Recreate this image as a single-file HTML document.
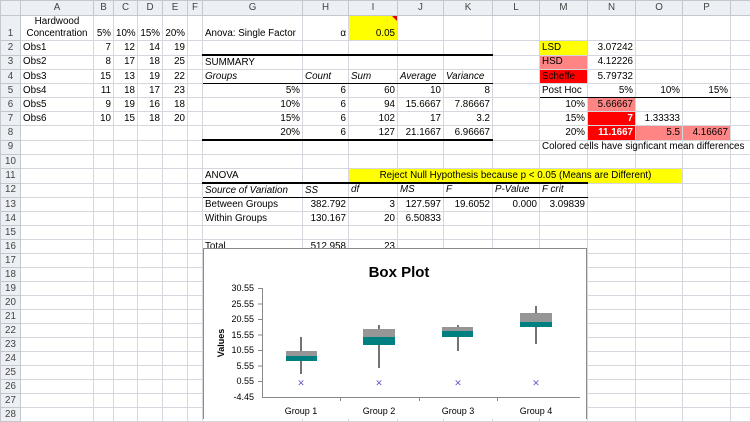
<!DOCTYPE html>
<html><head><meta charset="utf-8"><style>
body{margin:0;width:750px;height:419px;overflow:hidden;background:#fff;font-family:"Liberation Sans",Arial,sans-serif;font-size:9.8px;color:#000}
table{border-collapse:collapse;table-layout:fixed;position:absolute;left:0;top:0;width:750px}
td{border:1px solid #d4d8de;padding:0 2px;height:13px;white-space:nowrap;overflow:visible;line-height:12px;vertical-align:middle}
tr.h td{background:#eceff3;color:#444;text-align:center;height:14px;border-color:#c4c8ce}
td.rn{background:#eceff3;color:#444;text-align:center;border-color:#c4c8ce;padding:0}
.r{text-align:right}.c{text-align:center}.i{font-style:italic}
.y{background:#ffff00}.p{background:#ff8585}.red{background:#ff0000}.bw{font-weight:bold;color:#fff}
.tb{border-bottom:2px solid #000}.bb{border-bottom:1px solid #000}
tr.r1 td{vertical-align:bottom}
</style></head><body>
<table>
<colgroup><col style="width:20px"><col style="width:73px"><col style="width:20px"><col style="width:24px"><col style="width:25px"><col style="width:25px"><col style="width:15px"><col style="width:100px"><col style="width:46px"><col style="width:49px"><col style="width:46px"><col style="width:49px"><col style="width:47px"><col style="width:48px"><col style="width:48px"><col style="width:47px"><col style="width:48px"><col style="width:20px"></colgroup>
<tr class="h"><td></td><td>A</td><td>B</td><td>C</td><td>D</td><td>E</td><td>F</td><td>G</td><td>H</td><td>I</td><td>J</td><td>K</td><td>L</td><td>M</td><td>N</td><td>O</td><td>P</td><td></td></tr>
<tr class="r1" style="height:25px"><td class="rn">1</td><td class="c" style="line-height:12px">Hardwood<br>Concentration</td><td class="r">5%</td><td class="r">10%</td><td class="r">15%</td><td class="r">20%</td><td></td><td>Anova: Single Factor</td><td class="r">α</td><td class="r y" style="position:relative">0.05<span style="position:absolute;right:0;top:0;border-top:5px solid #d00;border-left:5px solid transparent"></span></td><td></td><td></td><td></td><td></td><td></td><td></td><td></td><td></td></tr>
<tr><td class="rn">2</td><td>Obs1</td><td class="r">7</td><td class="r">12</td><td class="r">14</td><td class="r">19</td><td></td><td class="tb"></td><td class="tb"></td><td class="tb"></td><td class="tb"></td><td class="tb"></td><td></td><td class="y">LSD</td><td class="r">3.07242</td><td></td><td></td><td></td></tr>
<tr><td class="rn">3</td><td>Obs2</td><td class="r">8</td><td class="r">17</td><td class="r">18</td><td class="r">25</td><td></td><td>SUMMARY</td><td></td><td></td><td></td><td></td><td></td><td class="p">HSD</td><td class="r">4.12226</td><td></td><td></td><td></td></tr>
<tr><td class="rn">4</td><td>Obs3</td><td class="r">15</td><td class="r">13</td><td class="r">19</td><td class="r">22</td><td></td><td class="i bb">Groups</td><td class="i bb">Count</td><td class="i bb">Sum</td><td class="i bb">Average</td><td class="i bb">Variance</td><td></td><td class="red">Scheffe</td><td class="r">5.79732</td><td></td><td></td><td></td></tr>
<tr><td class="rn">5</td><td>Obs4</td><td class="r">11</td><td class="r">18</td><td class="r">17</td><td class="r">23</td><td></td><td class="r">5%</td><td class="r">6</td><td class="r">60</td><td class="r">10</td><td class="r">8</td><td></td><td class="bb">Post Hoc</td><td class="r bb">5%</td><td class="r bb">10%</td><td class="r bb">15%</td><td></td></tr>
<tr><td class="rn">6</td><td>Obs5</td><td class="r">9</td><td class="r">19</td><td class="r">16</td><td class="r">18</td><td></td><td class="r">10%</td><td class="r">6</td><td class="r">94</td><td class="r">15.6667</td><td class="r">7.86667</td><td></td><td class="r">10%</td><td class="r p">5.66667</td><td></td><td></td><td></td></tr>
<tr><td class="rn">7</td><td>Obs6</td><td class="r">10</td><td class="r">15</td><td class="r">18</td><td class="r">20</td><td></td><td class="r">15%</td><td class="r">6</td><td class="r">102</td><td class="r">17</td><td class="r">3.2</td><td></td><td class="r">15%</td><td class="r red bw">7</td><td class="r">1.33333</td><td></td><td></td></tr>
<tr><td class="rn">8</td><td></td><td></td><td></td><td></td><td></td><td></td><td class="r tb">20%</td><td class="r tb">6</td><td class="r tb">127</td><td class="r tb">21.1667</td><td class="r tb">6.96667</td><td></td><td class="r">20%</td><td class="r red bw">11.1667</td><td class="r p">5.5</td><td class="r p">4.16667</td><td></td></tr>
<tr><td class="rn">9</td><td></td><td></td><td></td><td></td><td></td><td></td><td></td><td></td><td></td><td></td><td></td><td></td><td>Colored cells have signficant mean differences</td><td></td><td></td><td></td><td></td></tr>
<tr><td class="rn">10</td><td></td><td></td><td></td><td></td><td></td><td></td><td></td><td></td><td></td><td></td><td></td><td></td><td></td><td></td><td></td><td></td><td></td></tr>
<tr><td class="rn">11</td><td></td><td></td><td></td><td></td><td></td><td></td><td class="tb">ANOVA</td><td class="tb"></td><td colspan="7" class="y c" style="position:relative">Reject Null Hypothesis because p &lt; 0.05 (Means are Different)<span style="position:absolute;left:0;width:239px;bottom:-1px;border-bottom:2px solid #000"></span></td><td></td><td></td></tr>
<tr><td class="rn">12</td><td></td><td></td><td></td><td></td><td></td><td></td><td class="i bb">Source of Variation</td><td class="i bb">SS</td><td class="i bb">df</td><td class="i bb">MS</td><td class="i bb">F</td><td class="i bb">P-Value</td><td class="i bb">F crit</td><td></td><td></td><td></td><td></td></tr>
<tr><td class="rn">13</td><td></td><td></td><td></td><td></td><td></td><td></td><td>Between Groups</td><td class="r">382.792</td><td class="r">3</td><td class="r">127.597</td><td class="r">19.6052</td><td class="r">0.000</td><td class="r">3.09839</td><td></td><td></td><td></td><td></td></tr>
<tr><td class="rn">14</td><td></td><td></td><td></td><td></td><td></td><td></td><td>Within Groups</td><td class="r">130.167</td><td class="r">20</td><td class="r">6.50833</td><td></td><td></td><td></td><td></td><td></td><td></td><td></td></tr>
<tr><td class="rn">15</td><td></td><td></td><td></td><td></td><td></td><td></td><td></td><td></td><td></td><td></td><td></td><td></td><td></td><td></td><td></td><td></td><td></td></tr>
<tr><td class="rn">16</td><td></td><td></td><td></td><td></td><td></td><td></td><td>Total</td><td class="r">512.958</td><td class="r">23</td><td></td><td></td><td></td><td></td><td></td><td></td><td></td><td></td></tr>
<tr><td class="rn">17</td><td></td><td></td><td></td><td></td><td></td><td></td><td></td><td></td><td></td><td></td><td></td><td></td><td></td><td></td><td></td><td></td><td></td></tr>
<tr><td class="rn">18</td><td></td><td></td><td></td><td></td><td></td><td></td><td></td><td></td><td></td><td></td><td></td><td></td><td></td><td></td><td></td><td></td><td></td></tr>
<tr><td class="rn">19</td><td></td><td></td><td></td><td></td><td></td><td></td><td></td><td></td><td></td><td></td><td></td><td></td><td></td><td></td><td></td><td></td><td></td></tr>
<tr><td class="rn">20</td><td></td><td></td><td></td><td></td><td></td><td></td><td></td><td></td><td></td><td></td><td></td><td></td><td></td><td></td><td></td><td></td><td></td></tr>
<tr><td class="rn">21</td><td></td><td></td><td></td><td></td><td></td><td></td><td></td><td></td><td></td><td></td><td></td><td></td><td></td><td></td><td></td><td></td><td></td></tr>
<tr><td class="rn">22</td><td></td><td></td><td></td><td></td><td></td><td></td><td></td><td></td><td></td><td></td><td></td><td></td><td></td><td></td><td></td><td></td><td></td></tr>
<tr><td class="rn">23</td><td></td><td></td><td></td><td></td><td></td><td></td><td></td><td></td><td></td><td></td><td></td><td></td><td></td><td></td><td></td><td></td><td></td></tr>
<tr><td class="rn">24</td><td></td><td></td><td></td><td></td><td></td><td></td><td></td><td></td><td></td><td></td><td></td><td></td><td></td><td></td><td></td><td></td><td></td></tr>
<tr><td class="rn">25</td><td></td><td></td><td></td><td></td><td></td><td></td><td></td><td></td><td></td><td></td><td></td><td></td><td></td><td></td><td></td><td></td><td></td></tr>
<tr><td class="rn">26</td><td></td><td></td><td></td><td></td><td></td><td></td><td></td><td></td><td></td><td></td><td></td><td></td><td></td><td></td><td></td><td></td><td></td></tr>
<tr><td class="rn">27</td><td></td><td></td><td></td><td></td><td></td><td></td><td></td><td></td><td></td><td></td><td></td><td></td><td></td><td></td><td></td><td></td><td></td></tr>
<tr><td class="rn">28</td><td></td><td></td><td></td><td></td><td></td><td></td><td></td><td></td><td></td><td></td><td></td><td></td><td></td><td></td><td></td><td></td><td></td></tr>
</table>
<svg style="position:absolute;left:0;top:0" width="750" height="419" font-family="Liberation Sans, Arial, sans-serif">
<rect x="203.5" y="248.5" width="383" height="180" fill="#fff" stroke="#8a8a8a"/>
<text x="399" y="277" text-anchor="middle" font-size="15" font-weight="bold">Box Plot</text>
<g font-size="9" text-anchor="end" fill="#000">
<text x="254" y="291">30.55</text><text x="254" y="307">25.55</text><text x="254" y="322">20.55</text><text x="254" y="338">15.55</text><text x="254" y="353">10.55</text><text x="254" y="369">5.55</text><text x="254" y="384">0.55</text><text x="254" y="400">-4.45</text>
</g>
<text transform="translate(224,343) rotate(-90)" text-anchor="middle" font-size="9" font-weight="bold">Values</text>
<g stroke="#888" stroke-width="1">
<line x1="262.5" y1="288" x2="262.5" y2="397"/><line x1="262" y1="397.5" x2="580" y2="397.5"/>
<line x1="258" y1="288.5" x2="262" y2="288.5"/><line x1="258" y1="304" x2="262" y2="304"/><line x1="258" y1="319.5" x2="262" y2="319.5"/><line x1="258" y1="335" x2="262" y2="335"/><line x1="258" y1="350.5" x2="262" y2="350.5"/><line x1="258" y1="366" x2="262" y2="366"/><line x1="258" y1="381.5" x2="262" y2="381.5"/>
<line x1="340.5" y1="397" x2="340.5" y2="401"/><line x1="419.5" y1="397" x2="419.5" y2="401"/><line x1="497.5" y1="397" x2="497.5" y2="401"/>
</g>
<g stroke="#444" stroke-width="1.5">
<line x1="301" y1="337" x2="301" y2="374"/><line x1="379" y1="325" x2="379" y2="368"/><line x1="458" y1="325" x2="458" y2="351"/><line x1="536" y1="306" x2="536" y2="344"/>
</g>
<rect x="286" y="351" width="31" height="5" fill="#969696"/><rect x="286" y="356" width="31" height="5" fill="#008080"/>
<rect x="363" y="329" width="32" height="8" fill="#969696"/><rect x="363" y="337" width="32" height="8" fill="#008080"/>
<rect x="442" y="327" width="31" height="4" fill="#969696"/><rect x="442" y="331" width="31" height="6" fill="#008080"/>
<rect x="520" y="313" width="32" height="9" fill="#969696"/><rect x="520" y="322" width="32" height="5" fill="#008080"/>
<g font-size="9" fill="#6a5acd" text-anchor="middle"><text x="301" y="386">✕</text><text x="379" y="386">✕</text><text x="458" y="386">✕</text><text x="536" y="386">✕</text></g>
<g font-size="9" text-anchor="middle"><text x="301" y="414">Group 1</text><text x="379" y="414">Group 2</text><text x="458" y="414">Group 3</text><text x="536" y="414">Group 4</text></g>
</svg>
</body></html>
